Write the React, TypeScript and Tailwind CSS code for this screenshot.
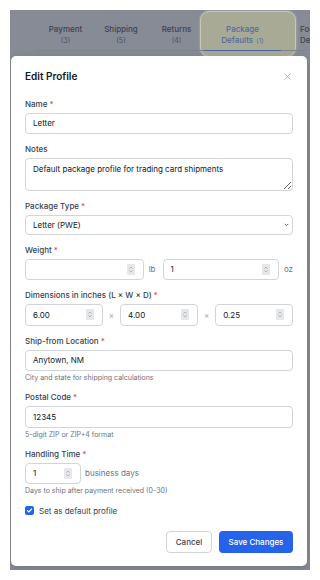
import React from "react";
import clsx from "clsx";

const tabs = [
  { label: "Payment", count: 3, w: "w-[55px]" },
  { label: "Shipping", count: 5, w: "w-[56px]" },
  { label: "Returns", count: 4, w: "w-[55px]" },
];

function Label({ text, required }: { text: string; required?: boolean }) {
  return (
    <div className="mb-[3px] text-[8px] leading-[11px] font-medium text-[#374151]">
      {text}
      {required && <span className="ml-[2px] text-[#ef4444]">*</span>}
    </div>
  );
}

function Helper({ children }: { children: React.ReactNode }) {
  return <div className="mt-[2px] text-[7px] leading-[9px] text-[#6b7280]">{children}</div>;
}

function TextBox({ value }: { value: string }) {
  return (
    <input
      readOnly
      value={value}
      className="block h-[21.5px] w-full rounded-[4px] border border-[#d1d5db] bg-white px-[7px] text-[8px] text-[#111827] outline-none"
    />
  );
}

function Spinner() {
  return (
    <span className="flex h-[11px] w-[8px] shrink-0 items-center justify-center rounded-[1px] bg-[#e5e7eb]">
      <svg width="6" height="9" viewBox="0 0 6 9" fill="none" stroke="#9ca3af" strokeWidth="0.7" strokeLinecap="round" strokeLinejoin="round">
        <path d="M1.6 3.4 3 2l1.4 1.4M1.6 5.6 3 7l1.4-1.4" />
      </svg>
    </span>
  );
}

function NumberBox({ value, className }: { value: string; className?: string }) {
  return (
    <div
      className={clsx(
        "flex h-[21.5px] min-w-0 items-center rounded-[4px] border border-[#d1d5db] bg-white pl-[7px] pr-[8px]",
        className
      )}
    >
      <input readOnly value={value} className="min-w-0 flex-1 bg-transparent text-[8px] text-[#111827] outline-none" />
      <Spinner />
    </div>
  );
}

function Times() {
  return <span className="text-[8px] leading-none text-[#9ca3af]">×</span>;
}

export default function App() {
  return (
    <div className="h-[580px] w-[320px] bg-white p-[10px] font-[Inter,sans-serif]">
      <div className="relative h-[560px] w-[300px] overflow-hidden bg-[#878b96]">
        {/* tour highlight over the active tab */}
        <div className="absolute left-[190px] top-[0.5px] h-[46.5px] w-[96px] rounded-[9px] border-[1.5px] border-[#c6c7b4] bg-[#a9aa96] shadow-[0_0_3px_rgba(255,255,255,0.35)]" />

        {/* tabs behind the overlay */}
        <div className="relative z-[1] ml-[28px] flex">
          {tabs.map((t) => (
            <div
              key={t.label}
              className={clsx(
                "flex h-[41px] shrink-0 flex-col items-center border-b border-[#7f838e] pt-[13px]",
                t.w
              )}
            >
              <span className="text-[8px] leading-[12px] font-medium text-[#3d4252]">{t.label}</span>
              <span className="text-[7px] leading-[12px] text-[#4a4f5c]">({t.count})</span>
            </div>
          ))}
          <div className="flex h-[41px] w-[77px] shrink-0 flex-col items-center border-b border-[#4a67a0] pt-[13.5px]">
            <span className="text-[8px] leading-[11.5px] font-medium text-[#4e6aa3]">Package</span>
            <span className="text-[8px] leading-[11.5px] font-medium text-[#4e6aa3]">
              Defaults <span className="ml-[1px] text-[6.5px] font-normal">(1)</span>
            </span>
          </div>
          <div className="flex h-[41px] w-[60px] shrink-0 flex-col border-b border-[#7f838e] pl-[19px] pt-[13.5px]">
            <span className="text-[8px] leading-[11.5px] font-medium text-[#3d4252]">Footer</span>
            <span className="text-[8px] leading-[11.5px] font-medium text-[#3d4252]">Details</span>
          </div>
        </div>

        {/* dialog */}
        <div className="absolute left-[1px] top-[46px] z-[2] w-[296px] rounded-[5px] bg-white px-[14px] pb-[13.5px] pt-[13px] shadow-[0_2px_8px_rgba(0,0,0,0.15)]">
          <div className="flex items-center justify-between">
            <h2 className="text-[10px] leading-[14px] font-semibold text-[#111827]">Edit Profile</h2>
            <svg className="mr-[2px]" width="7" height="7" viewBox="0 0 7 7" fill="none" stroke="#9ca3af" strokeWidth="0.8" strokeLinecap="round">
              <path d="M0.8 0.8l5.4 5.4M6.2 0.8 0.8 6.2" />
            </svg>
          </div>

          <div className="mt-[15.5px] flex flex-col gap-[10px]">
            <div>
              <Label text="Name" required />
              <TextBox value="Letter" />
            </div>

            <div>
              <Label text="Notes" />
              <textarea
                readOnly
                value="Default package profile for trading card shipments"
                className="block h-[33px] w-full resize-y rounded-[4px] border border-[#d1d5db] px-[7px] py-[5px] text-[8px] leading-[11px] text-[#111827] outline-none"
              />
            </div>

            <div>
              <Label text="Package Type" required />
              <div className="relative">
                <select className="block h-[19.5px] w-full appearance-none rounded-[4px] border border-[#d1d5db] bg-white pl-[7px] text-[8px] text-[#111827] outline-none">
                  <option>Letter (PWE)</option>
                </select>
                <svg
                  className="pointer-events-none absolute right-[4px] top-1/2 -translate-y-1/2"
                  width="5"
                  height="4"
                  viewBox="0 0 5 4"
                  fill="none"
                  stroke="#374151"
                  strokeWidth="0.8"
                  strokeLinecap="round"
                  strokeLinejoin="round"
                >
                  <path d="M1 1.2 2.5 2.7 4 1.2" />
                </svg>
              </div>
            </div>

            <div>
              <Label text="Weight" required />
              <div className="grid grid-cols-2 gap-[7px]">
                <div className="flex items-center gap-[5px]">
                  <NumberBox value="" className="flex-1" />
                  <span className="text-[8px] text-[#6b7280]">lb</span>
                </div>
                <div className="flex items-center gap-[5px]">
                  <NumberBox value="1" className="flex-1" />
                  <span className="text-[8px] text-[#6b7280]">oz</span>
                </div>
              </div>
            </div>

            <div>
              <Label text="Dimensions in inches (L × W × D)" required />
              <div className="flex items-center gap-[6px]">
                <NumberBox value="6.00" className="flex-1" />
                <Times />
                <NumberBox value="4.00" className="flex-1" />
                <Times />
                <NumberBox value="0.25" className="flex-1" />
              </div>
            </div>

            <div>
              <Label text="Ship-from Location" required />
              <TextBox value="Anytown, NM" />
              <Helper>City and state for shipping calculations</Helper>
            </div>

            <div>
              <Label text="Postal Code" required />
              <TextBox value="12345" />
              <Helper>5-digit ZIP or ZIP+4 format</Helper>
            </div>

            <div>
              <Label text="Handling Time" required />
              <div className="flex items-center gap-[4px]">
                <NumberBox value="1" className="w-[56px]" />
                <span className="text-[8px] text-[#6b7280]">business days</span>
              </div>
              <Helper>Days to ship after payment received (0-30)</Helper>
            </div>

            <label className="flex h-[11px] items-center gap-[5px]">
              <span className="flex h-[9px] w-[9px] items-center justify-center rounded-[2px] bg-[#2563eb]">
                <svg width="7" height="7" viewBox="0 0 7 7" fill="none" stroke="#fff" strokeWidth="1.1" strokeLinecap="round" strokeLinejoin="round">
                  <path d="M1.4 3.6 2.8 5 5.6 2" />
                </svg>
              </span>
              <span className="text-[8px] text-[#374151]">Set as default profile</span>
            </label>

            <div className="mt-[4.5px] flex justify-end gap-[7px]">
              <button className="flex h-[22px] w-[46px] items-center justify-center rounded-[4px] border border-[#d1d5db] bg-white text-[8px] font-medium text-[#374151]">
                Cancel
              </button>
              <button className="flex h-[22px] w-[74px] items-center justify-center rounded-[4px] bg-[#2563eb] text-[8px] font-medium text-white">
                Save Changes
              </button>
            </div>
          </div>
        </div>
      </div>
    </div>
  );
}
